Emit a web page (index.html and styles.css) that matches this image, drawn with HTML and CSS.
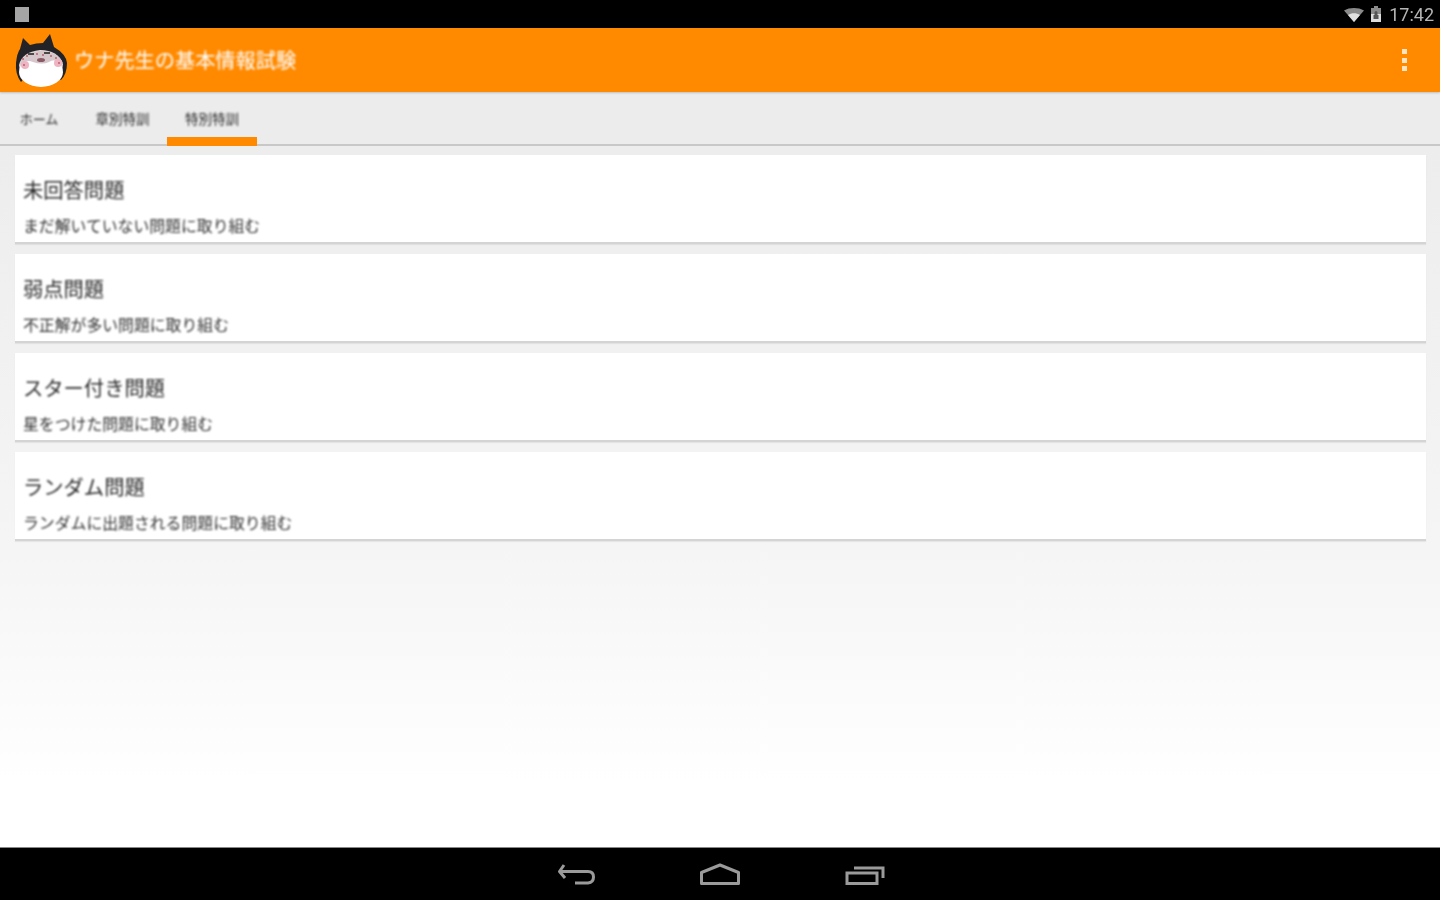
FILE: index.html
```html
<!DOCTYPE html>
<html lang="ja">
<head>
<meta charset="utf-8">
<title>ウナ先生の基本情報試験</title>
<link rel="stylesheet" href="styles.css">
</head>
<body>
<div class="screen">
  <header class="status">
    <span class="notif"></span>
    <div class="status-right">
      <svg class="wifi" width="20" height="14" viewBox="0 0 20 14"><path d="M0 2.500C5.500-.8 14.500-.8 20 2.500L10 14Z" fill="#8a8a8a"/><path d="M4 7C7.500 4.800 12.500 4.800 16 7L10 14Z" fill="#e0e0e0"/></svg>
      <svg class="battery" width="12" height="16" viewBox="0 0 12 16"><path d="M4 0h4v2h3v14H1V2h3Z" fill="#8c8c8c"/><path d="M1 8h10v8H1Z" fill="#dedede"/><path d="M4.500 6.500a1.500 1.500 0 0 1 3 0V9h1v4h-5V9h1Z" fill="#555"/></svg>
      <span class="clock">17:42</span>
    </div>
  </header>
  <div class="appbar">
    <svg class="logo" width="56" height="56" viewBox="0 0 56 56">
      <path d="M11 6 18 13Q24 11 31 11L38 2 42 15Q54 22 55 31 55 42 49 48L40 42H16L9 50Q3 42 4 31 5 21 8 17Z" fill="#232327"/>
      <path d="M7 33Q10 20 28 18 46 18 51 32L50 40H8Z" fill="#e4d8da"/>
      <ellipse cx="29" cy="40" rx="22" ry="15" fill="#fff"/>
      <path d="M8 33Q10 21 28 19 46 19 51 31 42 26 37 30 30 33 21 30 14 27 8 33Z" fill="#d5c7cb"/>
      <circle cx="13" cy="33" r="4" fill="#eeb4c1"/>
      <circle cx="46" cy="31" r="4" fill="#eeb4c1"/>
      <g fill="#b8606f"><circle cx="11" cy="27" r="1"/><circle cx="15" cy="24" r="1"/><circle cx="25" cy="22" r="1"/><circle cx="31" cy="23" r="1"/><circle cx="39" cy="24" r="1"/><circle cx="44" cy="26" r="1"/><circle cx="12" cy="33" r="1"/><circle cx="47" cy="31" r="1"/></g>
      <path d="M16 22h6M32 21h6" stroke="#4a4a4a" stroke-width="2"/>
      <ellipse cx="29" cy="28" rx="4" ry="2" fill="#8a5a66"/>
    </svg>
    <h1 class="app-title">ウナ先生の基本情報試験</h1>
    <div class="overflow"><i></i><i></i><i></i></div>
  </div>
  <nav class="tabs">
    <a class="tab tab-home"><span>ホーム</span></a>
    <a class="tab tab-chapter"><span>章別特訓</span></a>
    <a class="tab tab-special"><span>特別特訓</span></a>
  </nav>
  <main class="list">
    <section class="card"><h2>未回答問題</h2><p>まだ解いていない問題に取り組む</p></section>
    <section class="card"><h2>弱点問題</h2><p>不正解が多い問題に取り組む</p></section>
    <section class="card"><h2>スター付き問題</h2><p>星をつけた問題に取り組む</p></section>
    <section class="card"><h2>ランダム問題</h2><p>ランダムに出題される問題に取り組む</p></section>
  </main>
  <footer class="navbar">
    <svg width="40" height="26" viewBox="-2 0 40 26" fill="none" stroke="#9a9a9a" stroke-width="3"><path d="M7 2 2.500 8.500 8 15" stroke-linejoin="round"/><path d="M3 8.500H31Q36.500 8.500 36.500 14T31 20H18"/></svg>
    <svg width="42" height="26" viewBox="0 0 42 26" fill="none" stroke="#9a9a9a" stroke-width="3"><path d="M2.500 20.500V9.500L21 2 39.500 9.500V20.500Z" stroke-linejoin="round"/></svg>
    <svg width="40" height="26" viewBox="0 0 40 26" fill="none" stroke="#9a9a9a" stroke-width="3"><path d="M2 10H32V20.500H2Z"/><path d="M9 5H38V15"/></svg>
  </footer>
</div>
</body>
</html>
```
FILE: styles.css
```css
* { box-sizing: border-box; }
html, body { margin: 0; height: 100%; }
body { font-family: "Noto Sans CJK JP", "Roboto", sans-serif; overflow: hidden; }
.screen { width: 1440px; height: 900px; display: flex; flex-direction: column; background: #fff; }

.status { height: 28px; flex: none; background: #000; display: flex; align-items: center; justify-content: space-between; padding: 0 6px 0 15px; }
.notif { width: 14px; height: 15px; background: #a5a5a5; filter: blur(0.6px); }
.status-right { display: flex; align-items: center; filter: blur(0.7px); }
.wifi { margin-right: 6px; margin-top: 2px; }
.battery { margin-right: 7px; }
.clock { font-family: Roboto, sans-serif; font-size: 18px; color: #b5b5b5; }

.appbar { height: 64px; flex: none; background: #ff8a00; display: flex; align-items: center; padding: 0 33px 0 12px; box-shadow: 0 1px 2px rgba(0,0,0,.2); position: relative; }
.logo { margin-right: 6px; filter: blur(0.6px); }
.app-title { margin: 0; font-size: 20.200px; font-weight: 400; color: #fff; line-height: 1; flex: 1; filter: blur(0.8px); }
.overflow { display: flex; flex-direction: column; gap: 3.500px; filter: blur(0.5px); }
.overflow i { width: 5px; height: 5px; background: #ffe3c0; display: block; }

.tabs { height: 54px; flex: none; background: #ececec; display: flex; border-bottom: 2px solid #c8c8c8; }
.tab { height: 54px; display: flex; align-items: center; justify-content: center; font-size: 13.500px; color: #2c2c2c; padding-bottom: 2px; }
.tab span { filter: blur(0.8px); }
.tab-home { width: 78px; font-size: 13px; }
.tab-chapter { width: 89px; }
.tab-special { width: 90px; position: relative; }
.tab-special::after { content: ""; position: absolute; left: 0; right: 0; bottom: 0; height: 9px; background: #ff8a00; }

.list { flex: 1; padding: 9px 14px 0 15px; display: flex; flex-direction: column; gap: 10px; background: linear-gradient(#ededed 0, #f5f5f5 400px, #fff 640px); }
.card { height: 89px; background: #fff; border-bottom: 2px solid #d4d4d4; box-shadow: 0 1px 1px rgba(0,0,0,.06); padding: 20px 0 0 8px; }
.card h2 { margin: 0; font-size: 20.300px; font-weight: 400; line-height: 28px; color: #2a2a2a; filter: blur(0.8px); }
.card p { margin: 13px 0 0; font-size: 15.850px; line-height: 20px; color: #333; filter: blur(0.8px); }

.navbar { height: 53px; flex: none; background: #000; display: flex; align-items: center; justify-content: center; gap: 104px; border-top: 1px solid #888; padding-top: 3px; }
.navbar svg { filter: blur(0.6px); }
```
